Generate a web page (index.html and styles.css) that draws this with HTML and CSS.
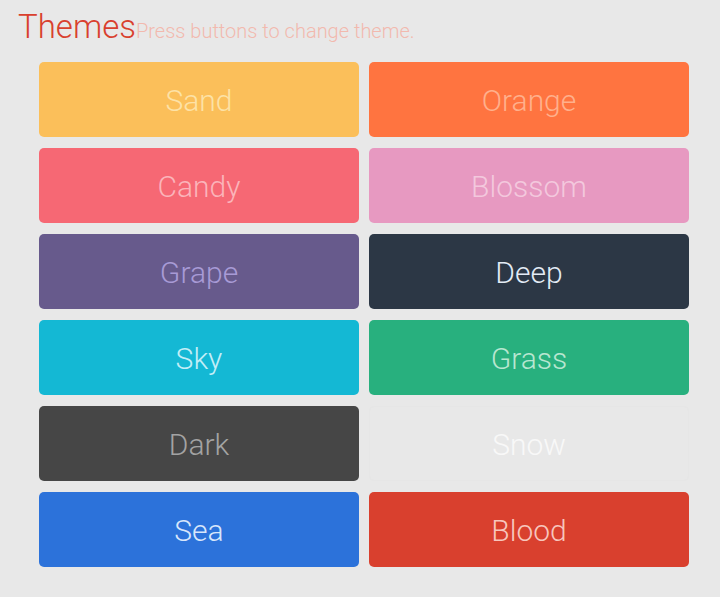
FILE: index.html
```html
<!DOCTYPE html>
<html>
<head>
<meta charset="utf-8">
<link rel="stylesheet" href="styles.css">
</head>
<body>
<header class="head">
  <h1 class="title">Themes</h1>
  <span class="sub">Press buttons to change theme.</span>
</header>
<main class="grid">
  <button class="btn sand">Sand</button>
  <button class="btn orange">Orange</button>
  <button class="btn candy">Candy</button>
  <button class="btn blossom">Blossom</button>
  <button class="btn grape">Grape</button>
  <button class="btn deep">Deep</button>
  <button class="btn sky">Sky</button>
  <button class="btn grass">Grass</button>
  <button class="btn dark">Dark</button>
  <button class="btn snow">Snow</button>
  <button class="btn sea">Sea</button>
  <button class="btn blood">Blood</button>
</main>
</body>
</html>
```
FILE: styles.css
```css
html, body {
  margin: 0;
  padding: 0;
  background: #e8e8e8;
  font-family: Roboto, "Liberation Sans", sans-serif;
  font-weight: 300;
}
.head {
  display: flex;
  align-items: baseline;
  padding: 6px 0 0 18px;
  height: 56px;
  box-sizing: border-box;
}
.title {
  margin: 0;
  font-size: 33px;
  font-weight: 300;
  color: #d9402e;
  line-height: 42px;
}
.sub {
  font-size: 20px;
  color: #f2b9ae;
}
.grid {
  display: grid;
  grid-template-columns: 320px 320px;
  grid-auto-rows: 75px;
  column-gap: 10px;
  row-gap: 11px;
  padding: 6px 0 0 39px;
}
.btn {
  border: none;
  border-radius: 5px;
  font-family: Roboto, "Liberation Sans", sans-serif;
  font-weight: 300;
  font-size: 30px;
  padding: 1px 0 0;
  margin: 0;
}
.sand { background: #fbbf5a; color: #fde2a6; }
.orange { background: #ff7440; color: #ffb08c; }
.candy { background: #f66874; color: #fbb4ba; }
.blossom { background: #e799c1; color: #f3c8dd; }
.grape { background: #675a8c; color: #a89ad6; }
.deep { background: #2c3745; color: #e3ebf5; }
.sky { background: #14b8d4; color: #c2eef7; }
.grass { background: #28b07e; color: #b7e6d0; }
.dark { background: #464646; color: #a3a3a3; }
.snow { background: #e8e8e8; color: #f8f8f8; border: 1px solid #e6e6e6; }
.sea { background: #2c72da; color: #d8e6fb; }
.blood { background: #d9402e; color: #f7c6bd; }
```
